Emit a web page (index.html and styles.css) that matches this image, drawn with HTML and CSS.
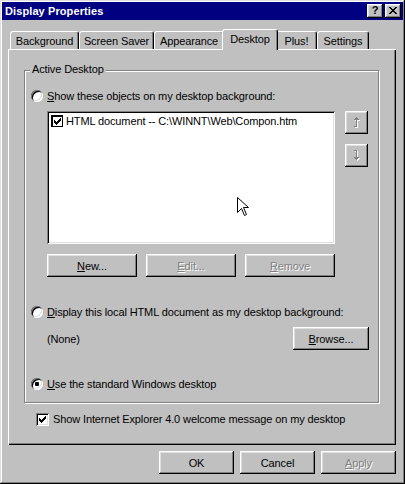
FILE: index.html
```html
<!DOCTYPE html>
<html>
<head>
<meta charset="utf-8">
<title>Display Properties</title>
<link rel="stylesheet" href="styles.css">
</head>
<body>
<div class="window">
  <div class="titlebar">
    <span class="title">Display Properties</span>
    <div class="tbuttons">
      <span class="tbtn help">?</span>
      <span class="tbtn close">
        <svg width="8" height="7" viewBox="0 0 8 7" shape-rendering="crispEdges"><path fill="#000" d="M0 0h2v1h-2zM6 0h2v1h-2zM1 1h2v1h-2zM5 1h2v1h-2zM2 2h4v1h-4zM3 3h2v1h-2zM2 4h4v1h-4zM1 5h2v1h-2zM5 5h2v1h-2zM0 6h2v1h-2zM6 6h2v1h-2z"/></svg>
      </span>
    </div>
  </div>
  <div class="content">
    <div class="tabs">
      <div class="tab t-bg">Background</div>
      <div class="tab t-ss">Screen Saver</div>
      <div class="tab t-ap">Appearance</div>
      <div class="tab t-dk active">Desktop</div>
      <div class="tab t-pl">Plus!</div>
      <div class="tab t-st">Settings</div>
    </div>
    <div class="panel">
      <div class="group">
        <div class="group-label">Active Desktop</div>
        <div class="group-body">
          <div class="opt opt-first">
            <span class="radio"></span>
            <span><u>S</u>how these objects on my desktop background:</span>
          </div>
          <div class="list-row">
            <div class="listbox">
              <div class="item">
                <span class="lcheck">
                  <svg width="7" height="7" viewBox="0 0 7 7" shape-rendering="crispEdges"><path fill="#000" d="M0 2h1v3h-1zM1 3h1v3h-1zM2 4h1v3h-1zM3 3h1v3h-1zM4 2h1v3h-1zM5 1h1v3h-1zM6 0h1v3h-1z"/></svg>
                </span>
                <span>HTML document -- C:\WINNT\Web\Compon.htm</span>
              </div>
              <svg class="cursor" width="13" height="20" viewBox="0 0 13 20"><path d="M0.5 0.5L0.5 15.5L4.5 11.5L7.5 18.5L9.5 17.5L6.5 10.5L11.5 10.5Z" fill="#fff" stroke="#000" stroke-width="1"/></svg>
            </div>
            <div class="arrows">
              <span class="btn sq">
                <svg width="8" height="11" viewBox="0 0 8 11" shape-rendering="crispEdges"><path fill="#fff" transform="translate(1 1)" d="M3 0h1v10h-1zM2 1h3v1h-3zM1 2h5v1h-5zM1 9h2v1h-2z"/><path fill="#808080" d="M3 0h1v10h-1zM2 1h3v1h-3zM1 2h5v1h-5zM1 9h2v1h-2z"/></svg>
              </span>
              <span class="btn sq">
                <svg width="8" height="11" viewBox="0 0 8 11" shape-rendering="crispEdges"><path fill="#fff" transform="translate(1 1)" d="M3 0h1v10h-1zM1 0h2v1h-2zM1 7h5v1h-5zM2 8h3v1h-3z"/><path fill="#808080" d="M3 0h1v10h-1zM1 0h2v1h-2zM1 7h5v1h-5zM2 8h3v1h-3z"/></svg>
              </span>
            </div>
          </div>
          <div class="btn-row">
            <span class="btn w90"><u>N</u>ew...</span>
            <span class="btn w90 disabled"><u>E</u>dit...</span>
            <span class="btn w90 disabled"><u>R</u>emove</span>
          </div>
          <div class="opt opt-second">
            <span class="radio"></span>
            <span><u>D</u>isplay this local HTML document as my desktop background:</span>
          </div>
          <div class="none-row">
            <span>(None)</span>
            <span class="btn w76"><u>B</u>rowse...</span>
          </div>
          <div class="opt opt-third">
            <span class="radio checked"></span>
            <span><u>U</u>se the standard Windows desktop</span>
          </div>
        </div>
      </div>
      <div class="check-row">
        <span class="checkbox">
          <svg width="7" height="7" viewBox="0 0 7 7" shape-rendering="crispEdges"><path fill="#000" d="M0 2h1v3h-1zM1 3h1v3h-1zM2 4h1v3h-1zM3 3h1v3h-1zM4 2h1v3h-1zM5 1h1v3h-1zM6 0h1v3h-1z"/></svg>
        </span>
        <span>Show Internet Explorer 4.0 welcome message on my desktop</span>
      </div>
    </div>
    <div class="footer">
      <span class="btn w75">OK</span>
      <span class="btn w75">Cancel</span>
      <span class="btn w75 disabled"><u>A</u>pply</span>
    </div>
  </div>
</div>
</body>
</html>
```
FILE: styles.css
```css
* { box-sizing: border-box; }
html, body { margin: 0; padding: 0; }
body {
  width: 405px;
  height: 484px;
  overflow: hidden;
  background: #c0c0c0;
  font-family: "Liberation Sans", Arial, sans-serif;
  font-size: 11px;
  letter-spacing: -0.12px;
  color: #000;
}
u { text-decoration: underline; text-underline-offset: 1px; }

.window {
  width: 405px;
  height: 484px;
  padding: 2px;
  background: #c0c0c0;
  box-shadow: inset -1px -1px #000, inset 1px 1px #dfdfdf, inset -2px -2px #808080, inset 2px 2px #fff;
  display: flex;
  flex-direction: column;
}

.titlebar {
  height: 18px;
  background: #000080;
  color: #fff;
  display: flex;
  align-items: center;
  justify-content: space-between;
  padding: 0 2px 0 3px;
}
.title { font-weight: bold; font-size: 11px; letter-spacing: 0.1px; }
.tbuttons { display: flex; gap: 2px; }
.tbtn {
  width: 16px;
  height: 14px;
  background: #c0c0c0;
  box-shadow: inset -1px -1px #000, inset 1px 1px #fff, inset -2px -2px #808080, inset 2px 2px #dfdfdf;
  display: flex;
  align-items: center;
  justify-content: center;
  color: #000;
  font-weight: bold;
  font-size: 11px;
  line-height: 1;
  padding-bottom: 1px;
}

.content { padding: 0 7px 0 6px; }

.tabs {
  display: flex;
  align-items: flex-end;
  height: 20px;
  margin-top: 9px;
  padding-left: 2px;
  position: relative;
  z-index: 1;
}
.tab {
  height: 18px;
  background: #c0c0c0;
  border: 1px solid;
  border-bottom: none;
  border-color: #fff #000 transparent #fff;
  border-radius: 3px 3px 0 0;
  box-shadow: inset -1px 0 #808080;
  display: flex;
  align-items: center;
  justify-content: center;
  white-space: nowrap;
}
.t-bg { width: 69px; }
.t-ss { width: 75px; }
.t-ap { width: 70px; }
.t-dk { width: 52px; }
.t-pl { width: 41px; }
.t-st { width: 52px; }
.tab.active {
  width: 56px;
  height: 21px;
  margin: 0 -2px -1px;
  padding-bottom: 2px;
  position: relative;
  z-index: 2;
}

.panel {
  height: 396px;
  padding: 21px 17px 0 16px;
  box-shadow: inset 1px 1px #fff, inset -1px -1px #000, inset -2px -2px #808080;
}

.group {
  height: 333px;
  border: 1px solid #808080;
  box-shadow: inset 1px 1px #fff, 1px 1px #fff;
}
.group-label {
  width: fit-content;
  margin: -8px 0 0 5px;
  padding: 0 2px;
  line-height: 13px;
  background: #c0c0c0;
}
.group-body { padding-left: 6px; }

.opt {
  display: flex;
  align-items: center;
  gap: 4px;
  height: 16px;
  white-space: nowrap;
}
.opt-first { margin-top: 12px; }
.opt-second { margin-top: 27px; }
.opt-third { margin-top: 26px; }

.radio {
  flex: none;
  width: 12px;
  height: 12px;
  border-radius: 50%;
  background: #fff;
  box-shadow: inset 1px 1px #808080, inset -1px -1px #fff, inset 2px 2px #000, inset -2px -2px #dfdfdf;
  display: flex;
  align-items: center;
  justify-content: center;
}
.radio.checked::after {
  content: "";
  width: 4px;
  height: 4px;
  border-radius: 1px;
  background: #000;
}

.list-row {
  display: flex;
  margin: 7px 0 0 16px;
}
.listbox {
  position: relative;
  width: 288px;
  height: 133px;
  background: #fff;
  padding: 2px;
  box-shadow: inset 1px 1px #808080, inset -1px -1px #fff, inset 2px 2px #000, inset -2px -2px #dfdfdf;
}
.item {
  display: flex;
  align-items: center;
  gap: 3px;
  height: 16px;
  padding-left: 2px;
  white-space: nowrap;
}
.lcheck {
  width: 12px;
  height: 12px;
  border: 1px solid #000;
  box-shadow: inset 1px 1px #000;
  background: #fff;
  display: flex;
  align-items: center;
  justify-content: center;
  padding: 1px 0 0 1px;
}
.cursor {
  position: absolute;
  left: 190px;
  top: 86px;
}
.arrows {
  display: flex;
  flex-direction: column;
  gap: 10px;
  margin-left: 10px;
}

.btn {
  height: 23px;
  background: #c0c0c0;
  box-shadow: inset -1px -1px #000, inset 1px 1px #fff, inset -2px -2px #808080, inset 2px 2px #dfdfdf;
  display: flex;
  align-items: center;
  justify-content: center;
  white-space: nowrap;
}
.btn.sq { width: 23px; }
.w90 { width: 90px; }
.w76 { width: 76px; }
.w75 { width: 75px; }
.disabled { color: #808080; text-shadow: 1px 1px 0 #fff; }

.btn-row {
  display: flex;
  gap: 9px;
  margin: 10px 0 0 16px;
}
.none-row {
  display: flex;
  align-items: center;
  justify-content: space-between;
  margin: 7px 9px 0 16px;
}

.check-row {
  display: flex;
  align-items: center;
  gap: 4px;
  height: 16px;
  margin: 8px 0 0 12px;
}
.checkbox {
  width: 13px;
  height: 13px;
  background: #fff;
  box-shadow: inset 1px 1px #808080, inset -1px -1px #fff, inset 2px 2px #000, inset -2px -2px #dfdfdf;
  display: flex;
  align-items: center;
  justify-content: center;
}

.footer {
  display: flex;
  justify-content: flex-end;
  gap: 6px;
  margin-top: 6px;
}
```
